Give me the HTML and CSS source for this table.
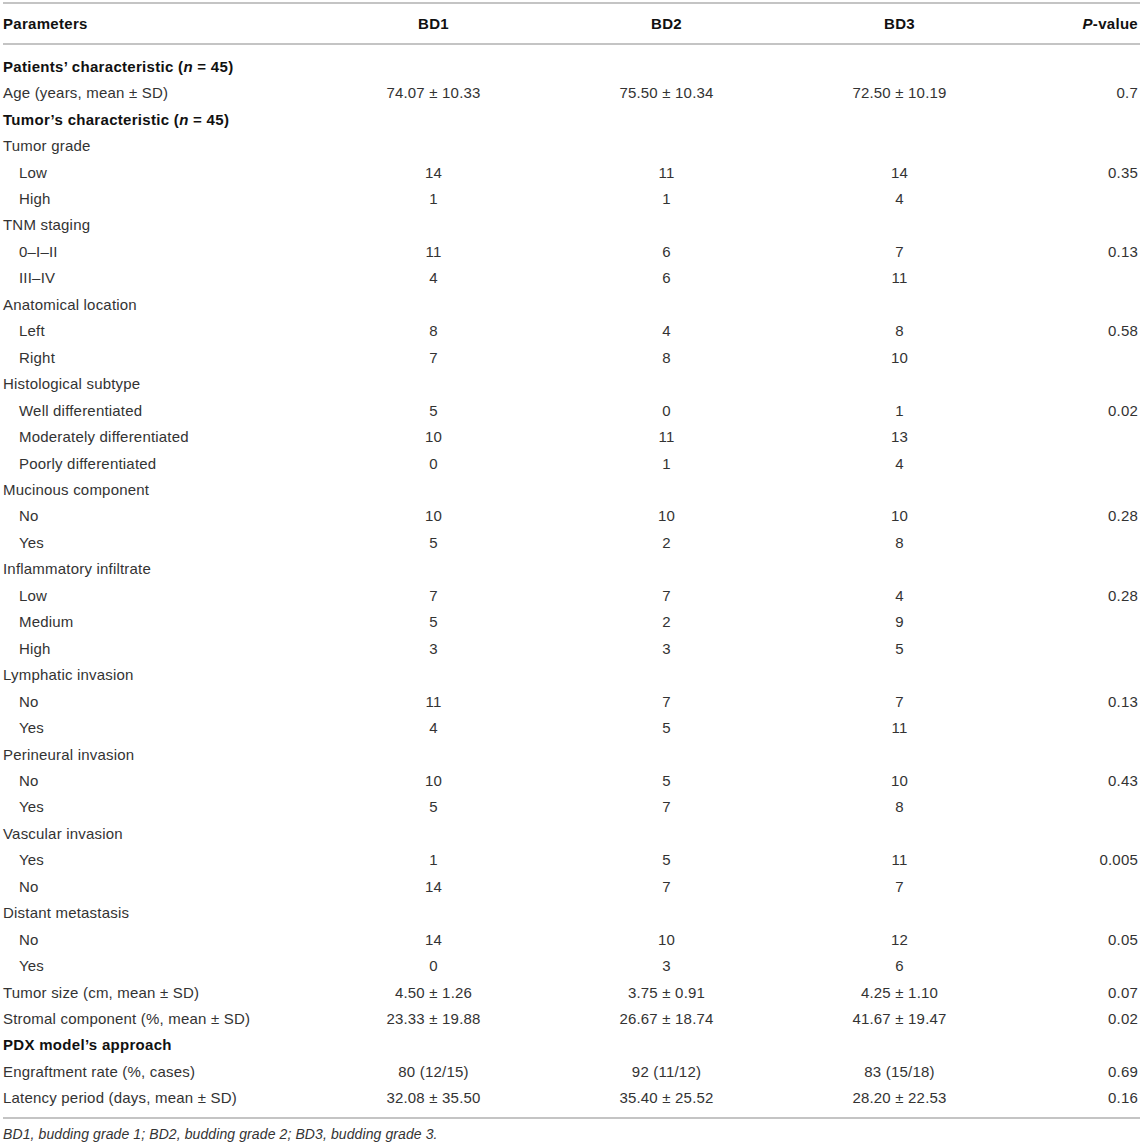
FILE: index.html
```html
<!DOCTYPE html>
<html>
<head>
    <meta charset="UTF-8">
    <title>Table 1</title>
    <link rel="stylesheet" href="styles.css">
</head>
<body>

<div class="wrap">
    <table class="data">
        <colgroup>
            <col class="c-name">
            <col class="c-bd">
            <col class="c-bd">
            <col class="c-bd">
            <col class="c-p">
        </colgroup>
        <thead>
            <tr>
                <th class="name">Parameters</th>
                <th>BD1</th>
                <th>BD2</th>
                <th>BD3</th>
                <th class="p"><i>P</i>-value</th>
            </tr>
        </thead>
        <tbody>
            <tr class="first"><td class="name sec" colspan="5">Patients’ characteristic (<i>n</i> = 45)</td></tr>
            <tr><td class="name">Age (years, mean ± SD)</td><td>74.07 ± 10.33</td><td>75.50 ± 10.34</td><td>72.50 ± 10.19</td><td class="p">0.7</td></tr>
            <tr><td class="name sec" colspan="5">Tumor’s characteristic (<i>n</i> = 45)</td></tr>
            <tr><td class="name" colspan="5">Tumor grade</td></tr>
            <tr><td class="name sub">Low</td><td>14</td><td>11</td><td>14</td><td class="p">0.35</td></tr>
            <tr><td class="name sub">High</td><td>1</td><td>1</td><td>4</td><td class="p"></td></tr>
            <tr><td class="name" colspan="5">TNM staging</td></tr>
            <tr><td class="name sub">0–I–II</td><td>11</td><td>6</td><td>7</td><td class="p">0.13</td></tr>
            <tr><td class="name sub">III–IV</td><td>4</td><td>6</td><td>11</td><td class="p"></td></tr>
            <tr><td class="name" colspan="5">Anatomical location</td></tr>
            <tr><td class="name sub">Left</td><td>8</td><td>4</td><td>8</td><td class="p">0.58</td></tr>
            <tr><td class="name sub">Right</td><td>7</td><td>8</td><td>10</td><td class="p"></td></tr>
            <tr><td class="name" colspan="5">Histological subtype</td></tr>
            <tr><td class="name sub">Well differentiated</td><td>5</td><td>0</td><td>1</td><td class="p">0.02</td></tr>
            <tr><td class="name sub">Moderately differentiated</td><td>10</td><td>11</td><td>13</td><td class="p"></td></tr>
            <tr><td class="name sub">Poorly differentiated</td><td>0</td><td>1</td><td>4</td><td class="p"></td></tr>
            <tr><td class="name" colspan="5">Mucinous component</td></tr>
            <tr><td class="name sub">No</td><td>10</td><td>10</td><td>10</td><td class="p">0.28</td></tr>
            <tr><td class="name sub">Yes</td><td>5</td><td>2</td><td>8</td><td class="p"></td></tr>
            <tr><td class="name" colspan="5">Inflammatory infiltrate</td></tr>
            <tr><td class="name sub">Low</td><td>7</td><td>7</td><td>4</td><td class="p">0.28</td></tr>
            <tr><td class="name sub">Medium</td><td>5</td><td>2</td><td>9</td><td class="p"></td></tr>
            <tr><td class="name sub">High</td><td>3</td><td>3</td><td>5</td><td class="p"></td></tr>
            <tr><td class="name" colspan="5">Lymphatic invasion</td></tr>
            <tr><td class="name sub">No</td><td>11</td><td>7</td><td>7</td><td class="p">0.13</td></tr>
            <tr><td class="name sub">Yes</td><td>4</td><td>5</td><td>11</td><td class="p"></td></tr>
            <tr><td class="name" colspan="5">Perineural invasion</td></tr>
            <tr><td class="name sub">No</td><td>10</td><td>5</td><td>10</td><td class="p">0.43</td></tr>
            <tr><td class="name sub">Yes</td><td>5</td><td>7</td><td>8</td><td class="p"></td></tr>
            <tr><td class="name" colspan="5">Vascular invasion</td></tr>
            <tr><td class="name sub">Yes</td><td>1</td><td>5</td><td>11</td><td class="p">0.005</td></tr>
            <tr><td class="name sub">No</td><td>14</td><td>7</td><td>7</td><td class="p"></td></tr>
            <tr><td class="name" colspan="5">Distant metastasis</td></tr>
            <tr><td class="name sub">No</td><td>14</td><td>10</td><td>12</td><td class="p">0.05</td></tr>
            <tr><td class="name sub">Yes</td><td>0</td><td>3</td><td>6</td><td class="p"></td></tr>
            <tr><td class="name">Tumor size (cm, mean ± SD)</td><td>4.50 ± 1.26</td><td>3.75 ± 0.91</td><td>4.25 ± 1.10</td><td class="p">0.07</td></tr>
            <tr><td class="name">Stromal component (%, mean ± SD)</td><td>23.33 ± 19.88</td><td>26.67 ± 18.74</td><td>41.67 ± 19.47</td><td class="p">0.02</td></tr>
            <tr><td class="name sec" colspan="5">PDX model’s approach</td></tr>
            <tr><td class="name">Engraftment rate (%, cases)</td><td>80 (12/15)</td><td>92 (11/12)</td><td>83 (15/18)</td><td class="p">0.69</td></tr>
            <tr class="last"><td class="name">Latency period (days, mean ± SD)</td><td>32.08 ± 35.50</td><td>35.40 ± 25.52</td><td>28.20 ± 22.53</td><td class="p">0.16</td></tr>
        </tbody>
    </table>
    <p class="note">BD1, budding grade 1; BD2, budding grade 2; BD3, budding grade 3.</p>
</div>

</body>
</html>
```

FILE: styles.css
```css
*{ margin: 0; padding: 0;}
body { background: #fff; font-family: "Liberation Sans", Arial, sans-serif; font-size: 15px; letter-spacing: 0.2px; color: #333;}
.wrap { padding: 2px 3px 0 3px;}
.data { width: 100%; border-collapse: collapse; table-layout: fixed; border-top: 2px solid #c4c4c4; border-bottom: 2px solid #c4c4c4;}
.c-name { width: 314px;}
.c-bd { width: 233px;}
.data th { height: 39px; font-weight: bold; color: #111; text-align: center; border-bottom: 2px solid #c4c4c4; vertical-align: middle; letter-spacing: 0.3px;}
.data td { height: 26.46px; line-height: 17px; text-align: center; vertical-align: middle; white-space: nowrap;}
.data .name { text-align: left;}
.data .p { text-align: right; padding-right: 2px;}
.data .sec { font-weight: bold; color: #111; letter-spacing: 0.3px;}
.data .sub { padding-left: 16px;}
.data tr.first td { padding-top: 8px;}
.data tr.last td { padding-bottom: 6px;}
.note { font-style: italic; font-size: 14px; letter-spacing: 0.1px; margin-top: 5px; line-height: 20px;}
```
